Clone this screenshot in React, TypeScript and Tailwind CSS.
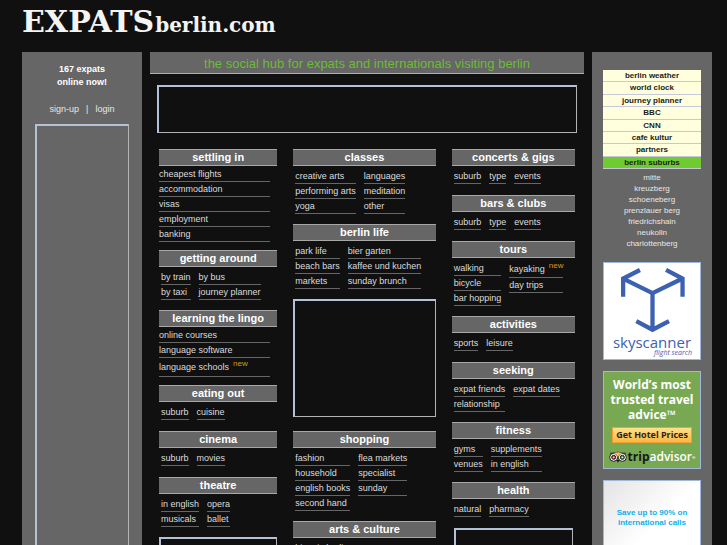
import React from 'react';

interface LinkItem {
  label: string;
  isNew?: boolean;
}

const item = (label: string, isNew = false): LinkItem => ({ label, isNew });

const quickLinks = [
  'berlin weather',
  'world clock',
  'journey planner',
  'BBC',
  'CNN',
  'cafe kultur',
  'partners',
  'berlin suburbs',
];

const suburbs = [
  'mitte',
  'kreuzberg',
  'schoeneberg',
  'prenzlauer berg',
  'friedrichshain',
  'neukolln',
  'charlottenberg',
];

const Heading: React.FC<{ title: string }> = ({ title }) => (
  <h2 className="h-[17px] border-y border-[#a8a8a8] bg-[#666666] text-center text-[11px] leading-[15px] font-bold text-white">
    {title}
  </h2>
);

const NewBadge = () => (
  <span className="relative -top-1 ml-1 text-[8px] leading-none text-[#d89a10]">new</span>
);

const TextLink: React.FC<{ link: LinkItem; tall: string }> = ({ link, tall }) => (
  <a
    href="#"
    className={`block border-b border-[#666666] whitespace-nowrap hover:text-white ${link.isNew ? tall : 'h-[15px] leading-[14px]'}`}
  >
    {link.label}
    {link.isNew && <NewBadge />}
  </a>
);

// One link per row, full width
const ListBlock: React.FC<{ title: string; links: LinkItem[] }> = ({ title, links }) => (
  <section className="pb-2">
    <Heading title={title} />
    <div className="mr-[7px] pt-px">
      {links.map((link) => (
        <TextLink key={link.label} link={link} tall="h-[19px] leading-[19px]" />
      ))}
    </div>
  </section>
);

// Links side by side in short columns
const GroupBlock: React.FC<{ title: string; groups: LinkItem[][] }> = ({ title, groups }) => (
  <section className="min-h-[46px] pb-[10px]">
    <Heading title={title} />
    <div className="flex gap-2 px-[2px] pt-[3px]">
      {groups.map((links, idx) => (
        <div key={idx}>
          {links.map((link) => (
            <TextLink key={link.label} link={link} tall="h-[17px] leading-[17px]" />
          ))}
        </div>
      ))}
    </div>
  </section>
);

const AdFrame: React.FC<{ className?: string }> = ({ className = '' }) => (
  <div className={`border border-t-2 border-l-2 border-[#b4b4b4] border-t-[#b4c2d8] border-l-[#b4c2d8] ${className}`} />
);

const SkyscannerAd = () => (
  <a href="#" className="flex h-[98px] flex-col items-center border border-[#9fb8dc] bg-white text-[#3c61b0]">
    <svg viewBox="40 12 214 206" className="mt-1 h-[68px] w-[71px]" fill="none" stroke="currentColor" strokeWidth="13">
      <path d="M109 21 L58 47 V102 M58 47 L147 91 L238 47 M188 21 L238 47 V102 M147 91 V200 M98 176 L147 202 L197 176" />
    </svg>
    <span className="font-['Open_Sans',sans-serif] text-[15px] leading-[14px]">skyscanner</span>
    <span className="mr-2 self-end font-['Open_Sans',sans-serif] text-[7px] leading-[7px] italic">flight search</span>
  </a>
);

const Owl = () => (
  <svg viewBox="0 0 54 36" className="h-3 w-[18px]">
    <path d="M3 5 H15 Q27 -1 39 5 H51 L47 11 H7 Z" fill="#181818" />
    <circle cx="14" cy="19" r="12" fill="#fff" stroke="#181818" strokeWidth="3" />
    <circle cx="40" cy="19" r="12" fill="#fff" stroke="#181818" strokeWidth="3" />
    <path d="M14 7 Q27 0 40 7 Q29 10 27 20 Q25 10 14 7 Z" fill="#eec25c" />
    <circle cx="14" cy="19" r="6" fill="#d9534a" stroke="#181818" strokeWidth="3" />
    <circle cx="40" cy="19" r="6" fill="#5fa04e" stroke="#181818" strokeWidth="3" />
    <circle cx="14" cy="19" r="2" fill="#fff" />
    <circle cx="40" cy="19" r="2" fill="#fff" />
    <path d="M22 27 H32 L27 35 Z" fill="#181818" />
  </svg>
);

const TripAdvisorAd = () => (
  <div className="flex h-[98px] flex-col items-center border border-[#9fb8dc] bg-[#79a853] pt-[5px] font-['Open_Sans',sans-serif] font-bold">
    <p className="text-center text-[12px] leading-[15px] whitespace-nowrap text-white">
      World’s most
      <br />
      trusted travel
      <br />
      advice™
    </p>
    <button
      type="button"
      className="mt-[5px] h-4 w-20 border border-[#f0a030] bg-linear-to-b from-[#ffe08a] to-[#fbb741] text-[9px] leading-[14px] whitespace-nowrap text-[#2c2410]"
    >
      Get Hotel Prices
    </button>
    <a href="#" className="mt-[6px] flex items-center gap-px text-[12px] leading-4 text-white">
      <Owl />
      <span className="whitespace-nowrap">
        <span className="text-[#181818]">trip</span>
        <span className="font-semibold">advisor</span>
        <sup className="text-[4px]">®</sup>
      </span>
    </a>
  </div>
);

const CallsAd = () => (
  <a
    href="#"
    className="block h-[98px] border border-[#9fb8dc] bg-linear-to-br from-[#e4e4e6] to-white to-50% pt-[27px] text-center text-[8px] leading-[10px] font-bold text-[#12aeea]"
  >
    Save up to 90% on
    <br />
    international calls
  </a>
);

export default function App() {
  return (
    <div className="min-h-screen bg-[#101010] pr-[15px] pb-4 pl-[22px] font-['Liberation_Sans',Arial,sans-serif] text-[#dcdcdc]">
      <header className="h-[52px] pt-1">
        <h1 className="font-['DejaVu_Serif',serif] text-[30px] leading-9 font-bold text-[#f4f4f4]">
          EXPATS<span className="ml-px text-[20px]">berlin.com</span>
        </h1>
      </header>

      <div className="grid grid-cols-[120px_1fr_120px] gap-2">
        {/* Members */}
        <aside className="flex flex-col bg-[#666666] px-[13px] pt-[11px] text-center text-[9px] leading-[13px]">
          <p className="font-bold text-white">
            167 expats
            <br />
            online now!
          </p>
          <p className="mt-[14px] text-[#e6e6e6]">
            <a href="#">sign-up</a>
            <span className="mx-[7px]">|</span>
            <a href="#">login</a>
          </p>
          <AdFrame className="mt-2 flex-1" />
        </aside>

        {/* Directory */}
        <main>
          <p className="h-[22px] border-b border-[#b0b0b0] bg-[#666666] text-center text-[13px] leading-[23px] text-[#6cbc34]">
            the social hub for expats and internationals visiting berlin
          </p>
          <AdFrame className="mx-[7px] mt-[11px] h-12" />

          <div className="mt-4 grid grid-cols-[118fr_142fr_123fr] gap-4 px-[9px] text-[9px]">
            <div>
              <ListBlock
                title="settling in"
                links={[item('cheapest flights'), item('accommodation'), item('visas'), item('employment'), item('banking')]}
              />
              <GroupBlock
                title="getting around"
                groups={[
                  [item('by train'), item('by taxi')],
                  [item('by bus'), item('journey planner')],
                ]}
              />
              <ListBlock
                title="learning the lingo"
                links={[item('online courses'), item('language software'), item('language schools', true)]}
              />
              <GroupBlock title="eating out" groups={[[item('suburb')], [item('cuisine')]]} />
              <GroupBlock title="cinema" groups={[[item('suburb')], [item('movies')]]} />
              <GroupBlock
                title="theatre"
                groups={[
                  [item('in english'), item('musicals')],
                  [item('opera'), item('ballet')],
                ]}
              />
              <AdFrame className="h-20" />
            </div>

            <div>
              <GroupBlock
                title="classes"
                groups={[
                  [item('creative arts'), item('performing arts'), item('yoga')],
                  [item('languages'), item('meditation'), item('other')],
                ]}
              />
              <GroupBlock
                title="berlin life"
                groups={[
                  [item('park life'), item('beach bars'), item('markets')],
                  [item('bier garten'), item('kaffee und kuchen'), item('sunday brunch')],
                ]}
              />
              <AdFrame className="mb-[14px] h-[118px]" />
              <GroupBlock
                title="shopping"
                groups={[
                  [item('fashion'), item('household'), item('english books'), item('second hand')],
                  [item('flea markets'), item('specialist'), item('sunday')],
                ]}
              />
              <GroupBlock title="arts & culture" groups={[[item('historic berlin')]]} />
            </div>

            <div>
              <GroupBlock title="concerts & gigs" groups={[[item('suburb')], [item('type')], [item('events')]]} />
              <GroupBlock title="bars & clubs" groups={[[item('suburb')], [item('type')], [item('events')]]} />
              <GroupBlock
                title="tours"
                groups={[
                  [item('walking'), item('bicycle'), item('bar hopping')],
                  [item('kayaking', true), item('day trips')],
                ]}
              />
              <GroupBlock title="activities" groups={[[item('sports')], [item('leisure')]]} />
              <GroupBlock
                title="seeking"
                groups={[[item('expat friends'), item('relationship')], [item('expat dates')]]}
              />
              <GroupBlock
                title="fitness"
                groups={[
                  [item('gyms'), item('venues')],
                  [item('supplements'), item('in english')],
                ]}
              />
              <GroupBlock title="health" groups={[[item('natural')], [item('pharmacy')]]} />
              <AdFrame className="mx-[2px] h-20" />
            </div>
          </div>
        </main>

        {/* City links and partners */}
        <aside className="bg-[#666666] px-[11px] pt-[18px] pb-4 text-center text-[8px]">
          <nav className="grid h-[99px] grid-rows-8 font-bold text-[#1c1c1c]">
            {quickLinks.map((label) => (
              <a
                key={label}
                href="#"
                className={`border-b border-[#c4c8d8] leading-[12px] ${label === 'berlin suburbs' ? 'bg-[#6ecb30]' : 'bg-[#ffffdd]'}`}
              >
                {label}
              </a>
            ))}
          </nav>
          <ul className="mt-[3px] leading-[11px] text-[#e6e6e6]">
            {suburbs.map((name) => (
              <li key={name}>
                <a href="#">{name}</a>
              </li>
            ))}
          </ul>
          <div className="mt-[13px] flex flex-col gap-[11px]">
            <SkyscannerAd />
            <TripAdvisorAd />
            <CallsAd />
          </div>
        </aside>
      </div>
    </div>
  );
}
